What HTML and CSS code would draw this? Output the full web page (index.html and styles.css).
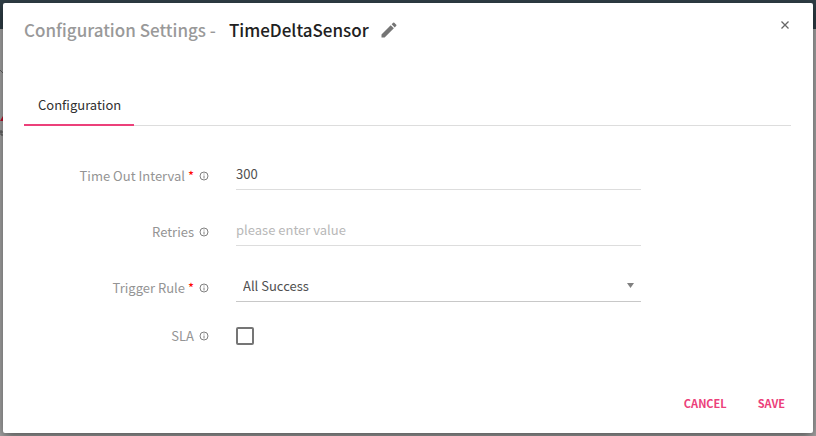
FILE: index.html
```html
<!DOCTYPE html>
<html lang="en">

<head>
  <meta charset="utf-8" />
  <title>Configuration Settings</title>
  <link rel="stylesheet" href="styles.css">
</head>

<body>
  <div class="backdrop">
    <div class="topbar"></div>
    <svg class="canvas-edge" viewBox="0 0 3 80" aria-hidden="true">
      <path d="M0 9l3 3" stroke="#666" fill="none" />
      <path d="M0 60l3-5v5z" fill="#c4122d" />
      <path d="M0 71h3M1 69v5h2" stroke="#555" fill="none" />
    </svg>
  </div>

  <main class="dialog" role="dialog" aria-labelledby="title">
    <header class="dialog-header">
      <h1 class="title" id="title">
        <span class="title-prefix">Configuration Settings -</span>
        <span>TimeDeltaSensor</span>
      </h1>
      <button class="icon-button" type="button" aria-label="Edit name">
        <svg width="20" height="20" viewBox="0 0 24 24">
          <path fill="#757575" d="M3 17.25V21h3.75L17.81 9.94l-3.75-3.75L3 17.25zM20.71 7.04a1 1 0 0 0 0-1.41l-2.34-2.34a1 1 0 0 0-1.41 0l-1.83 1.83 3.75 3.75 1.83-1.83z" />
        </svg>
      </button>
      <button class="icon-button close" type="button" aria-label="Close">
        <svg width="8" height="8" viewBox="0 0 8 8">
          <path d="M.5.5l7 7M7.5.5l-7 7" stroke="#666" stroke-width="1.3" />
        </svg>
      </button>
    </header>

    <nav class="tabs">
      <button class="tab" type="button">Configuration</button>
    </nav>

    <form class="form" id="config">
      <div class="row">
        <div class="label">
          <label for="timeout">Time Out Interval <span class="required">*</span></label>
          <svg class="info" viewBox="0 0 10 10"><circle cx="5" cy="5" r="4" /><path d="M5 4.5v3M5 2.5v1" /></svg>
        </div>
        <input class="field" type="text" id="timeout" value="300">
      </div>
      <div class="row">
        <div class="label">
          <label for="retries">Retries</label>
          <svg class="info" viewBox="0 0 10 10"><circle cx="5" cy="5" r="4" /><path d="M5 4.5v3M5 2.5v1" /></svg>
        </div>
        <input class="field" type="text" id="retries" placeholder="please enter value">
      </div>
      <div class="row">
        <div class="label">
          <label for="trigger">Trigger Rule <span class="required">*</span></label>
          <svg class="info" viewBox="0 0 10 10"><circle cx="5" cy="5" r="4" /><path d="M5 4.5v3M5 2.5v1" /></svg>
        </div>
        <div class="select-wrap">
          <select class="field select" id="trigger">
            <option>All Success</option>
          </select>
          <svg class="arrow" viewBox="0 0 7 5"><path d="M0 0h7L3.5 5z" fill="#808080" /></svg>
        </div>
      </div>
      <div class="row row-check">
        <div class="label">
          <label for="sla">SLA</label>
          <svg class="info" viewBox="0 0 10 10"><circle cx="5" cy="5" r="4" /><path d="M5 4.5v3M5 2.5v1" /></svg>
        </div>
        <input class="checkbox" type="checkbox" id="sla">
      </div>
    </form>

    <footer class="actions">
      <button class="action" type="button">CANCEL</button>
      <button class="action" type="submit" form="config">SAVE</button>
    </footer>
  </main>
</body>

</html>
```

FILE: styles.css
```css
* {
  box-sizing: border-box;
}

body {
  display: flex;
  min-height: 100vh;
  margin: 0;
  padding: 3px;
  font: 13px / 20px "Noto Sans CJK SC", "Open Sans", sans-serif;
  color: #505050;
}

button,
input,
select {
  margin: 0;
  padding: 0;
  border: 0;
  background: none;
  font: inherit;
  color: inherit;
}

/* The dimmed page under the dialog */
.backdrop {
  position: absolute;
  inset: 0;
  z-index: -1;
  background: #a8a8a8;
}

.topbar {
  height: 29px;
  background: #2f3e46;
}

.canvas-edge {
  display: block;
  width: 3px;
  height: 80px;
  margin-top: 32px;
}

.dialog {
  display: flex;
  flex: 1;
  flex-direction: column;
  padding: 11px 22px 20px 21px;
  border-radius: 2px;
  background: #fff;
  box-shadow: 0 4px 12px rgba(0, 0, 0, 0.5);
}

.dialog-header {
  display: flex;
  align-items: center;
  height: 32px;
}

.title {
  display: flex;
  gap: 13px;
  margin: 0;
  font-size: 17px;
  font-weight: 500;
  color: #212121;
}

.title-prefix {
  color: #999;
}

.icon-button {
  display: flex;
  margin-left: 10px;
}

.close {
  margin: 0 2px 10px auto;
}

.tabs {
  display: flex;
  margin-top: 40px;
  border-bottom: 1px solid #ddd;
}

.tab {
  height: 40px;
  margin-bottom: -1px;
  padding: 0 13px 0 14px;
  border-bottom: 2px solid #ec407a;
  color: #303030;
}

.form {
  display: grid;
  gap: 24px;
  margin-top: 32px;
}

.row {
  display: grid;
  grid-template-columns: 185px 1fr;
  column-gap: 27px;
  align-items: center;
  padding-right: 150px;
}

.label {
  display: flex;
  align-items: center;
  justify-content: flex-end;
  gap: 5px;
  padding-top: 3px;
  color: #949494;
}

.row-check .label {
  padding-top: 0;
}

.required {
  color: #f00;
}

.info {
  width: 10px;
  height: 10px;
  fill: none;
  stroke: #808080;
}

.field {
  width: 100%;
  height: 32px;
  border-bottom: 1px solid #ddd;
  border-radius: 0;
  outline: none;
}

.field::placeholder {
  color: #b8b8b8;
  opacity: 1;
}

.select-wrap {
  position: relative;
}

.select {
  display: block;
  padding-left: 7px;
  border-color: #c8c8c8;
  appearance: none;
}

.arrow {
  position: absolute;
  top: 13px;
  right: 7px;
  width: 7px;
  height: 5px;
  pointer-events: none;
}

.checkbox {
  width: 18px;
  height: 18px;
  border: 2px solid #757575;
  border-radius: 2px;
  appearance: none;
}

.checkbox:checked {
  background: #ec407a;
}

.actions {
  display: flex;
  justify-content: flex-end;
  gap: 31px;
  margin-top: auto;
  padding-right: 6px;
}

.action {
  font-size: 11px;
  font-weight: 700;
  color: #ec407a;
}
```
